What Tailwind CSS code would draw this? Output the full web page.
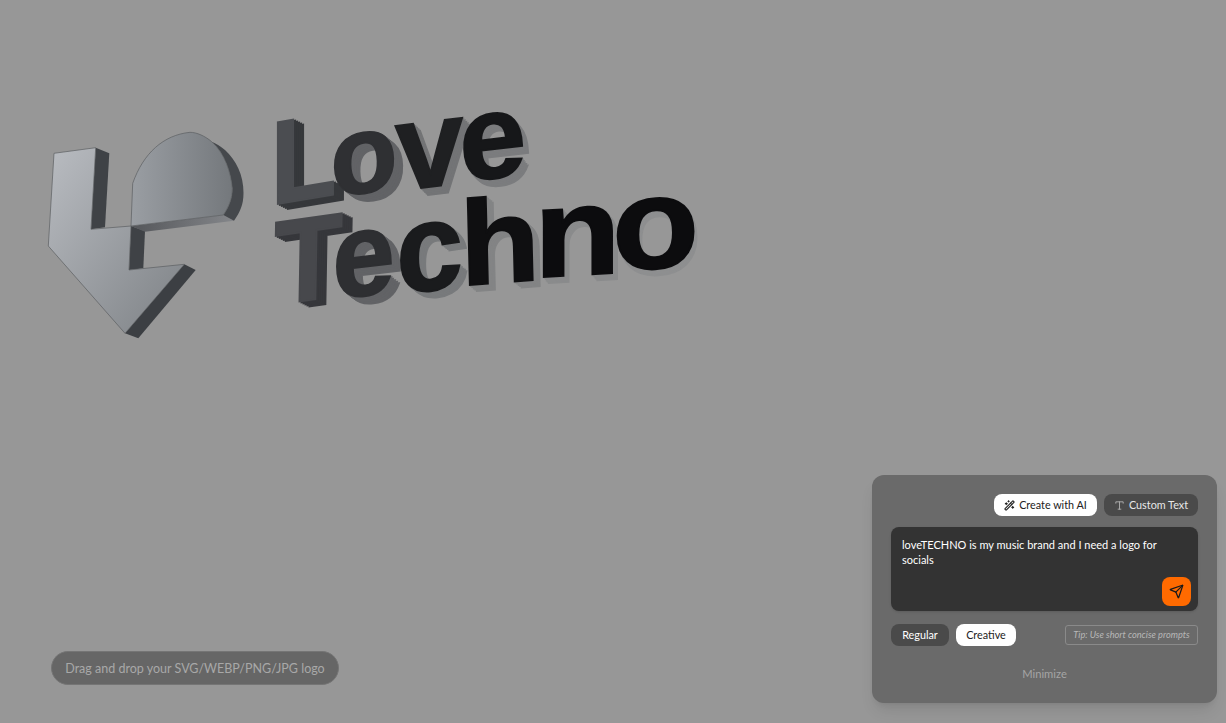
<!doctype html>
<html>
<head>
<meta charset="utf-8">
<script src="https://cdn.jsdelivr.net/npm/@tailwindcss/browser@4"></script>
</head>
<body class="m-0">
<div class="relative w-[1226px] h-[723px] overflow-hidden bg-[#979797] font-['Lato',sans-serif]">
  <svg class="absolute inset-0 font-['Liberation_Sans',sans-serif] font-bold" width="1226" height="723" viewBox="0 0 1226 723" font-size="100">
    <defs>
      <linearGradient id="fa" x1="0" y1="0" x2="1" y2="1"><stop offset="0" stop-color="#b9bcc1"/><stop offset="1" stop-color="#7d8185"/></linearGradient>
      <linearGradient id="ft" x1="0" y1="0" x2="1" y2="0"><stop offset="0" stop-color="#9a9ea3"/><stop offset="1" stop-color="#74787c"/></linearGradient>
      <linearGradient id="fs" x1="0" y1="0" x2="1" y2="0"><stop offset="0" stop-color="#54565a"/><stop offset="1" stop-color="#84868a"/></linearGradient>
      <text id="l1" stroke-width="1.5" transform="matrix(1.08 -.18 0 1.19 270.4 205.3)">L</text>
      <text id="l2" stroke-width="1.5" transform="matrix(1.1 -.16 .03 1.12 331.2 197.6)">o</text>
      <text id="l3" stroke-width="1.5" transform="matrix(1.22 -.15 .05 1.23 397.4 190.9)">v</text>
      <text id="l4" stroke-width="1.5" transform="matrix(1.2 -.14 .04 1.2 460.5 181.7)">e</text>
      <text id="t1" stroke-width="1.5" transform="matrix(1.12 -.158 -.02 1.2 273.3 305.3)">T</text>
      <text id="t2" stroke-width="1.5" transform="matrix(1.12 -.13 0 1.2 332.6 298.9)">e</text>
      <text id="t3" stroke-width="1.5" transform="matrix(1.2 -.12 0 1.25 396.2 293.6)">c</text>
      <text id="t4" stroke-width="1.5" transform="matrix(1.31 -.1 .03 1.2 460.8 285.7)">h</text>
      <text id="t5" stroke-width="1.5" transform="matrix(1.42 -.08 0 1.26 534 277.6)">n</text>
      <text id="t6" stroke-width="1.5" transform="matrix(1.42 -.08 0 1.3 612.2 270.4)">o</text>
    </defs>

    <!-- emblem -->
    <g stroke-linejoin="round">
      <polygon points="95.7,147.7 109.3,153.3 105,227.3 91,229.3" fill="#3f4246"/>
      <polygon points="131,226 145,231 143.3,268.3 129,270" fill="#3f4246"/>
      <polygon points="131,226 223.3,215 234,220.7 145,231.7" fill="url(#fs)"/>
      <path d="M223.3 215L234 220.7C240 212 243.5 205 243.5 193C243.5 175 236 160 225 150C220 146 216 143.5 211.7 141.7C225 153.3 231 173.3 232.3 188.3C232.3 198.3 229.3 206 223.3 215Z" fill="#45484c"/>
      <polygon points="184.3,264.3 195.7,270 138.3,338.3 125,333.3" fill="#3c3f43"/>
      <polygon points="54,153.3 95.7,147.7 91,229.3 131,226 129,270 184.3,264.3 125,333.3 48.3,246" fill="url(#fa)" stroke="#5c5e62" stroke-width=".7"/>
      <path d="M131 226L223.3 215C229.3 206 232.3 198.3 232.3 188.3C231 173.3 225 153.3 211.7 141.7C205 136 196.7 132.3 190 132.3C163.3 135 143.3 153.3 132.7 183.3Z" fill="url(#ft)" stroke="#5c5e62" stroke-width=".7"/>
    </g>

    <!-- wordmark: extrusion copies, then the face -->
    <g fill="#36383b" stroke="#36383b"><use href="#l1" x="10" y="5"/><use href="#l1" x="8" y="4"/><use href="#l1" x="6" y="3"/><use href="#l1" x="4" y="2"/><use href="#l1" x="2" y="1"/></g>
    <use href="#l1" fill="#4b4d51" stroke="#4b4d51"/>
    <g fill="#626366" stroke="#626366"><use href="#l2" x="9" y="7"/><use href="#l2" x="7" y="5.5"/><use href="#l2" x="5" y="4"/><use href="#l2" x="3" y="2.5"/><use href="#l2" x="1.5" y="1"/></g>
    <use href="#l2" fill="#2f3033" stroke="#2f3033"/>
    <g fill="#737476" stroke="#737476"><use href="#l3" x="7" y="7"/><use href="#l3" x="5.5" y="5.5"/><use href="#l3" x="4" y="4"/><use href="#l3" x="2.5" y="2.5"/><use href="#l3" x="1" y="1"/></g>
    <use href="#l3" fill="#1f2022" stroke="#1f2022"/>
    <g fill="#7b7c7e" stroke="#7b7c7e"><use href="#l4" x="6" y="7"/><use href="#l4" x="4.5" y="5.5"/><use href="#l4" x="3" y="4"/><use href="#l4" x="2" y="2.5"/><use href="#l4" x="1" y="1"/></g>
    <use href="#l4" fill="#161719" stroke="#161719"/>

    <g fill="#36373b" stroke="#36373b"><use href="#t1" x="10" y="5"/><use href="#t1" x="8" y="4"/><use href="#t1" x="6" y="3"/><use href="#t1" x="4" y="2"/><use href="#t1" x="2" y="1"/></g>
    <use href="#t1" fill="#47484c" stroke="#47484c"/>
    <g fill="#626366" stroke="#626366"><use href="#t2" x="9" y="7"/><use href="#t2" x="7" y="5.5"/><use href="#t2" x="5" y="4"/><use href="#t2" x="3" y="2.5"/><use href="#t2" x="1.5" y="1"/></g>
    <use href="#t2" fill="#2e2f32" stroke="#2e2f32"/>
    <g fill="#787a7c" stroke="#787a7c"><use href="#t3" x="7" y="6"/><use href="#t3" x="5.5" y="4.5"/><use href="#t3" x="4" y="3.5"/><use href="#t3" x="2.5" y="2"/><use href="#t3" x="1" y="1"/></g>
    <use href="#t3" fill="#1a1b1d" stroke="#1a1b1d"/>
    <g fill="#838485" stroke="#838485"><use href="#t4" x="7" y="6"/><use href="#t4" x="5.5" y="4.5"/><use href="#t4" x="4" y="3.5"/><use href="#t4" x="2.5" y="2"/><use href="#t4" x="1" y="1"/></g>
    <use href="#t4" fill="#0f0f11" stroke="#0f0f11"/>
    <g fill="#8a8b8c" stroke="#8a8b8c"><use href="#t5" x="5" y="6"/><use href="#t5" x="4" y="4.5"/><use href="#t5" x="3" y="3.5"/><use href="#t5" x="2" y="2"/><use href="#t5" x="1" y="1"/></g>
    <use href="#t5" fill="#0c0c0e" stroke="#0c0c0e"/>
    <g fill="#8e8f90" stroke="#8e8f90"><use href="#t6" x="3" y="6"/><use href="#t6" x="2.4" y="4.5"/><use href="#t6" x="1.8" y="3.5"/><use href="#t6" x="1.2" y="2"/><use href="#t6" x=".6" y="1"/></g>
    <use href="#t6" fill="#0c0c0e" stroke="#0c0c0e"/>
  </svg>

  <div class="absolute left-[51px] top-[651px] w-[288px] h-[34px] pt-[2px] flex items-center justify-center rounded-full bg-[#666666] border border-[#757575] text-[12.5px] whitespace-nowrap text-[#a8a8a8]">Drag and drop your SVG/WEBP/PNG/JPG logo</div>

  <div class="absolute left-[872px] top-[475px] w-[345px] h-[228px] rounded-xl bg-[#6a6a6a] shadow-lg px-[19px] pt-[19px] flex flex-col">
    <div class="flex justify-end gap-[7px] text-[10.8px] h-[22px]">
      <button class="w-[103px] rounded-lg bg-white text-[#222] flex items-center justify-center gap-[4px] whitespace-nowrap">
        <svg width="11" height="11" viewBox="0 0 24 24" fill="none" stroke="currentColor" stroke-width="2.4" stroke-linecap="round" stroke-linejoin="round"><path d="m21.64 3.64-1.28-1.28a1.21 1.21 0 0 0-1.72 0L2.36 18.64a1.21 1.21 0 0 0 0 1.72l1.28 1.28a1.2 1.2 0 0 0 1.72 0L21.64 5.36a1.2 1.2 0 0 0 0-1.72"/><path d="m14 7 3 3"/><path d="M5 6v4"/><path d="M19 14v4"/><path d="M10 2v2"/><path d="M7 8H3"/><path d="M21 16h-4"/><path d="M11 3H9"/></svg>
        Create with AI
      </button>
      <button class="w-[94px] rounded-lg bg-[#4a4a4a] text-[#e8e8e8] flex items-center justify-center gap-[4px] whitespace-nowrap">
        <svg width="11" height="11" viewBox="0 0 24 24" fill="none" stroke="#b0b0b0" stroke-width="2" stroke-linecap="round" stroke-linejoin="round"><path d="M4 7V4h16v3"/><path d="M9 20h6"/><path d="M12 4v16"/></svg>
        Custom Text
      </button>
    </div>
    <div class="relative mt-[11px] h-[84px] rounded-lg bg-[#333333] shadow-sm px-[11px] py-[10px] text-[11px] leading-[15px] text-white">
      loveTECHNO is my music brand and I need a logo for socials
      <button class="absolute right-[7px] bottom-[5px] w-[29px] h-[29px] rounded-lg bg-[#ff6a00] flex items-center justify-center text-[#1a1a1a]">
        <svg width="15" height="15" viewBox="0 0 24 24" fill="none" stroke="currentColor" stroke-width="2" stroke-linecap="round" stroke-linejoin="round"><path d="M14.536 21.686a.5.5 0 0 0 .937-.024l6.5-19a.496.496 0 0 0-.635-.635l-19 6.5a.5.5 0 0 0-.024.937l7.93 3.18a2 2 0 0 1 1.112 1.11z"/><path d="m21.854 2.147-10.94 10.939"/></svg>
      </button>
    </div>
    <div class="mt-[13px] flex items-center h-[22px] text-[10.8px]">
      <button class="w-[58px] h-[22px] rounded-lg bg-[#4a4a4a] text-white">Regular</button>
      <button class="ml-[7px] w-[60px] h-[22px] rounded-lg bg-white text-[#222]">Creative</button>
      <div class="ml-auto w-[133px] h-[20px] rounded-[3px] border border-[#8a8a8a] flex items-center justify-center text-[9.2px] italic whitespace-nowrap text-[#b8b8b8]">Tip: Use short concise prompts</div>
    </div>
    <div class="mt-[20px] text-center text-[11.2px] text-[#a5a5a5]">Minimize</div>
  </div>
</div>
</body>
</html>
